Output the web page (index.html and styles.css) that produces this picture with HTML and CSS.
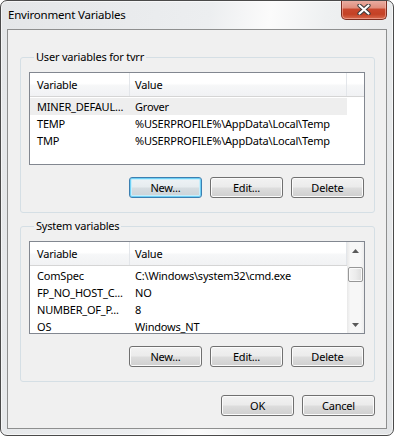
FILE: index.html
```html
<!DOCTYPE html>
<html lang="en">
<head>
    <meta charset="UTF-8">
    <meta name="viewport" content="width=device-width, initial-scale=1.0">
    <title>Environment Variables</title>
    <link rel="stylesheet" href="styles.css">
</head>
<body>
    <div class="window">
        <!-- Title bar -->
        <div class="titlebar">
            <span class="title">Environment Variables</span>
            <button class="close" aria-label="Close">
                <svg width="14" height="11" viewBox="0 0 14 11">
                    <path d="M2.5 1.5 L11.5 9.5 M11.5 1.5 L2.5 9.5" stroke="#3b3b3b" stroke-width="4.2" stroke-linecap="round"/>
                    <path d="M2.5 1.5 L11.5 9.5 M11.5 1.5 L2.5 9.5" stroke="#fff" stroke-width="2.2" stroke-linecap="round"/>
                </svg>
            </button>
        </div>

        <div class="client">
            <!-- User variables -->
            <div class="group">
                <div class="group-title">User variables for tvrr</div>
                <div class="listview">
                    <div class="lv-main">
                        <div class="lv-head">
                            <span class="col1">Variable</span>
                            <span class="col2">Value</span>
                            <span class="col-rest"></span>
                        </div>
                        <div class="lv-row selected"><span class="col1">MINER_DEFAUL...</span><span class="col2">Grover</span></div>
                        <div class="lv-row"><span class="col1">TEMP</span><span class="col2">%USERPROFILE%\AppData\Local\Temp</span></div>
                        <div class="lv-row"><span class="col1">TMP</span><span class="col2">%USERPROFILE%\AppData\Local\Temp</span></div>
                    </div>
                </div>
                <div class="buttons">
                    <button class="btn default">New...</button>
                    <button class="btn">Edit...</button>
                    <button class="btn">Delete</button>
                </div>
            </div>

            <!-- System variables -->
            <div class="group system">
                <div class="group-title">System variables</div>
                <div class="listview">
                    <div class="lv-main">
                        <div class="lv-head">
                            <span class="col1">Variable</span>
                            <span class="col2">Value</span>
                        </div>
                        <div class="lv-row"><span class="col1">ComSpec</span><span class="col2">C:\Windows\system32\cmd.exe</span></div>
                        <div class="lv-row"><span class="col1">FP_NO_HOST_C...</span><span class="col2">NO</span></div>
                        <div class="lv-row"><span class="col1">NUMBER_OF_P...</span><span class="col2">8</span></div>
                        <div class="lv-row"><span class="col1">OS</span><span class="col2">Windows_NT</span></div>
                    </div>
                    <div class="scrollbar">
                        <div class="sb-arrow">
                            <svg width="7" height="4" viewBox="0 0 7 4"><polygon points="0,4 3.5,0 7,4" fill="#5a5a5a"/></svg>
                        </div>
                        <div class="sb-track">
                            <div class="sb-thumb"></div>
                        </div>
                        <div class="sb-arrow">
                            <svg width="7" height="4" viewBox="0 0 7 4"><polygon points="0,0 7,0 3.5,4" fill="#5a5a5a"/></svg>
                        </div>
                    </div>
                </div>
                <div class="buttons">
                    <button class="btn">New...</button>
                    <button class="btn">Edit...</button>
                    <button class="btn">Delete</button>
                </div>
            </div>

            <!-- Dialog buttons -->
            <div class="dialog-buttons">
                <button class="btn">OK</button>
                <button class="btn">Cancel</button>
            </div>
        </div>
    </div>
</body>
</html>
```

FILE: styles.css
```css
/* Global Reset */
* {
    margin: 0;
    padding: 0;
    box-sizing: border-box;
}

body {
    background: #fff;
    font-family: 'Noto Sans', 'Open Sans', sans-serif;
    font-size: 11px;
    letter-spacing: -0.2px;
    color: #000;
}

/* Window frame */
.window {
    width: 394px;
    height: 436px;
    border: 1px solid #4a4a4a;
    border-radius: 7px;
    background: linear-gradient(100deg, #e4e6e8 0%, #eceef0 45%, #fbfbfb 58%, #eef0f1 70%, #e2e4e6 100%);
    box-shadow: inset 0 0 0 1px rgba(255, 255, 255, 0.6);
    display: flex;
    flex-direction: column;
    overflow: hidden;
}

/* Title bar */
.titlebar {
    height: 28px;
    display: flex;
    justify-content: space-between;
    align-items: flex-start;
    padding-left: 7px;
}

.title {
    font-size: 11.5px;
    line-height: 28px;
    color: #000;
}

.close {
    width: 46px;
    height: 20px;
    margin-top: -1px;
    margin-right: 6px;
    border: 1px solid #7b2d20;
    border-top: none;
    border-radius: 0 0 5px 5px;
    background: linear-gradient(#eab1a6 0%, #e08f7e 40%, #c9472d 50%, #c44125 75%, #d86b4f 100%);
    box-shadow: inset 0 0 0 1px rgba(255, 200, 190, 0.5);
    display: flex;
    justify-content: center;
    align-items: center;
}

/* Client area */
.client {
    flex: 1;
    margin: 0 6px 6px 6px;
    border: 1px solid #8e8f8f;
    background: #f0f0f0;
    padding: 27px 11px 12px 12px;
}

/* Group boxes */
.group {
    border: 1px solid #d5dfe5;
    border-radius: 3px;
    padding: 0 9px 14px 8px;
}

.group.system {
    margin-top: 13px;
}

.group-title {
    width: fit-content;
    margin: -9px 0 0 5px;
    padding: 0 2px;
    line-height: 15px;
    background: #f0f0f0;
}

/* List views */
.listview {
    margin-top: 8px;
    height: 93px;
    border: 1px solid #828790;
    background: #fff;
    display: flex;
}

.lv-main {
    flex: 1;
}

.lv-head {
    height: 24px;
    display: flex;
    border-bottom: 1px solid #d5d5d5;
    background: linear-gradient(#fff 0%, #fff 45%, #f6f7f8 55%, #f1f2f4 100%);
}

.lv-head span {
    line-height: 23px;
}

.lv-head .col1,
.lv-head .col2 {
    border-right: 1px solid #e3e6ea;
}

.col1 {
    width: 100px;
    padding-left: 7px;
    white-space: nowrap;
    overflow: hidden;
}

.col2 {
    width: 217px;
    padding-left: 5px;
    white-space: nowrap;
    overflow: hidden;
}

.col-rest {
    flex: 1;
}

.lv-row {
    width: 317px;
    height: 17px;
    line-height: 17px;
    display: flex;
}

.lv-head + .lv-row {
    margin-top: 1px;
}

.lv-row.selected {
    background: #eeeeee;
}

/* Scrollbar */
.scrollbar {
    width: 17px;
    display: flex;
    flex-direction: column;
    background: linear-gradient(to right, #e8e8e8 0%, #f7f7f7 20%, #f7f7f7 80%, #ededed 100%);
}

.sb-arrow {
    height: 17px;
    display: flex;
    justify-content: center;
    align-items: center;
}

.sb-track {
    flex: 1;
    padding: 8px 1px 0 1px;
}

.sb-thumb {
    height: 15px;
    border: 1px solid #979797;
    border-radius: 2px;
    background: linear-gradient(to right, #f4f4f4 0%, #ececec 50%, #dcdcdc 100%);
    box-shadow: inset 0 0 0 1px #fafafa;
}

/* Buttons */
.buttons {
    display: flex;
    justify-content: flex-end;
    gap: 8px;
    margin-top: 12px;
    margin-right: 1px;
}

.dialog-buttons {
    display: flex;
    justify-content: flex-end;
    gap: 8px;
    margin-top: 13px;
}

.btn {
    width: 73px;
    height: 21px;
    font-family: inherit;
    font-size: 11px;
    letter-spacing: -0.2px;
    color: #000;
    border: 1px solid #707070;
    border-radius: 3px;
    background: linear-gradient(#f2f2f2 0%, #ebebeb 48%, #dddddd 52%, #cfcfcf 100%);
    box-shadow: inset 0 0 0 1px #fbfbfb;
}

.btn.default {
    border-color: #3c7fb1;
    background: linear-gradient(#eef3f6 0%, #e6ecef 48%, #d6dde1 52%, #cbd3d8 100%);
    box-shadow: inset 0 0 0 1px #6fd0f5, inset 0 0 0 2px #c8eefb;
}
```
